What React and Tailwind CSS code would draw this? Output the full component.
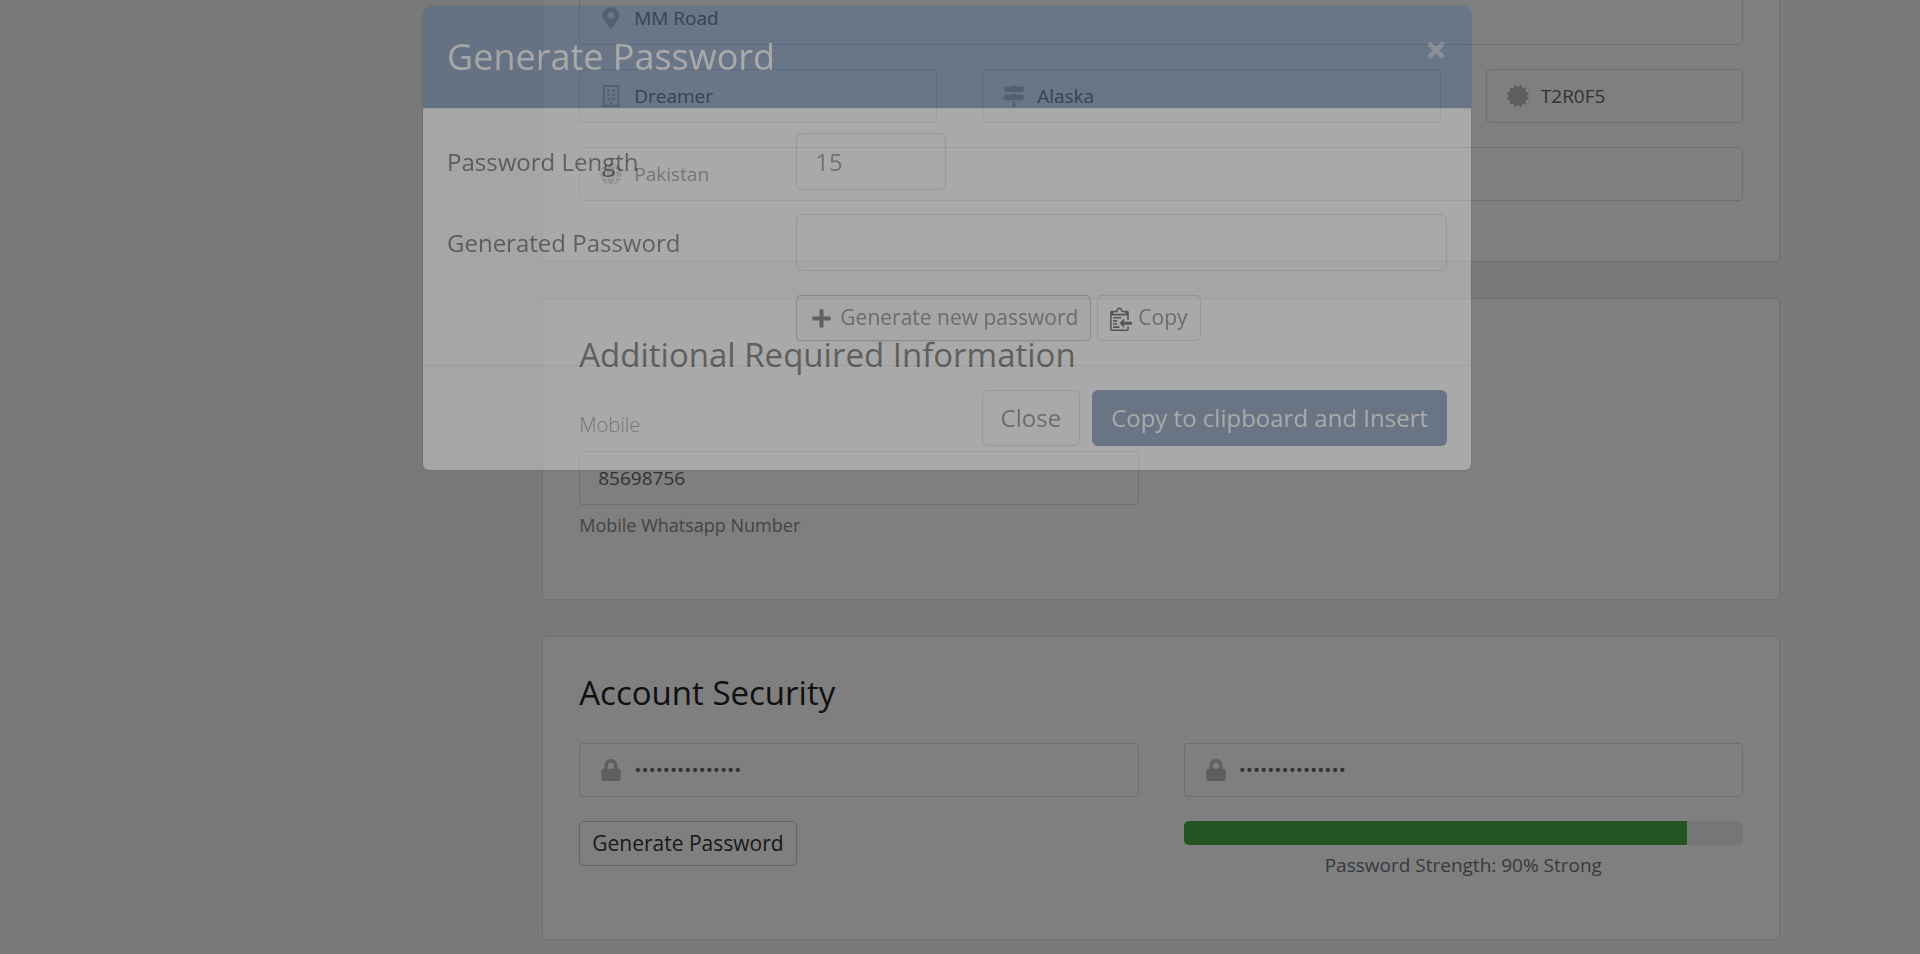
import { FaMapMarkerAlt, FaRegBuilding, FaMapSigns, FaCertificate, FaGlobe, FaLock, FaPlus } from "react-icons/fa";

const INPUT = "min-w-0 flex-1 appearance-none self-stretch bg-transparent pr-4 text-[19px] text-[#666] outline-none";

function Card({ children }) {
  return (
    <section className="rounded-[5px] border border-black/12 bg-white p-9">{children}</section>
  );
}

function Field({ id, label, icon: Icon, className = "", children }) {
  return (
    <div className={`flex h-[54px] items-center rounded-[4px] border border-[#dcdcdc] bg-white ${className}`}>
      <label htmlFor={id} className="flex w-[54px] justify-center pl-2 text-[#bcbcbc]">
        <Icon className="size-[22px]" aria-hidden="true" />
        <span className="sr-only">{label}</span>
      </label>
      {children}
    </div>
  );
}

function ClippyIcon() {
  return (
    <svg viewBox="0 0 14 16" className="h-[25px] w-[22px] fill-black" aria-hidden="true">
      <path
        fillRule="evenodd"
        d="M2 13h4v1H2v-1zm5-6H2v1h5V7zm2 3V8l-3 3 3 3v-2h5v-2H9zM4.5 9H2v1h2.5V9zM2 12h2.5v-1H2v1zm9 1h1v2c-.02.28-.11.52-.3.7-.19.18-.42.28-.7.3H1c-.55 0-1-.45-1-1V4c0-.55.45-1 1-1h3c0-1.11.89-2 2-2 1.11 0 2 .89 2 2h3c.55 0 1 .45 1 1v5h-1V6H1v9h10v-2zM2 5h8c0-.55-.45-1-1-1H8c-.55 0-1-.45-1-1s-.45-1-1-1-1 .45-1 1-.45 1-1 1H3c-.55 0-1 .45-1 1z"
      />
    </svg>
  );
}

function PasswordDialog() {
  return (
    <div className="fixed inset-0 flex items-start justify-center overflow-hidden pt-[5px] pr-[26px]">
      <div
        role="dialog"
        aria-labelledby="dialog-title"
        className="w-full max-w-[1050px] rounded-[7px] border border-black/20 bg-white bg-clip-padding opacity-33"
      >
        <div className="flex h-[103px] items-start justify-between rounded-t-[6px] border-b border-black/12 bg-[#3d6498] bg-clip-padding px-6 pt-6">
          <h2 id="dialog-title" className="text-[36px] leading-[54px] font-medium text-white">
            Generate Password
          </h2>
          <button type="button" aria-label="Close dialog" className="text-[38px] leading-[36px] font-bold text-white opacity-50 text-shadow-[0_1px_0_#fff]">
            ×
          </button>
        </div>
        <div className="flex flex-col gap-6 p-6">
          <div className="grid grid-cols-12 items-center gap-x-12">
            <label htmlFor="length" className="col-span-4 text-[24px] whitespace-nowrap text-[#222]">
              Password Length
            </label>
            <div className="col-span-8">
              <input id="length" type="text" defaultValue="15" className="h-[57px] w-[150px] rounded-[6px] border border-black/20 bg-white px-[18px] text-[24px] text-[#555]" />
            </div>
          </div>
          <div className="grid grid-cols-12 items-center gap-x-12">
            <label htmlFor="generated" className="col-span-4 text-[24px] whitespace-nowrap text-[#222]">
              Generated Password
            </label>
            <input id="generated" type="text" className="col-span-8 h-[57px] rounded-[6px] border border-black/20 bg-white px-[18px] text-[24px] text-[#555]" />
          </div>
          <div className="grid grid-cols-12 gap-x-12">
            <div className="col-span-8 col-start-5 flex gap-1.5">
              <button type="button" className="flex h-[46px] items-center gap-1.5 rounded-[5px] border border-black/30 bg-[#f5f5f5] px-3 text-[21px] text-[#444] shadow-sm">
                <FaPlus className="w-[25px] text-[#222]" aria-hidden="true" />
                Generate new password
              </button>
              <button type="button" className="flex h-[46px] items-center gap-1.5 rounded-[5px] border border-black/20 px-3 text-[21px] text-[#444]">
                <ClippyIcon />
                Copy
              </button>
            </div>
          </div>
        </div>
        <div className="flex justify-end gap-3 border-t border-black/12 p-6">
          <button type="button" className="h-14 rounded-[6px] border border-black/20 px-[18px] text-[24px] text-[#444]">
            Close
          </button>
          <button type="button" className="h-14 rounded-[6px] bg-[#3d6390] px-[19px] text-[24px] font-medium text-white">
            Copy to clipboard and Insert
          </button>
        </div>
      </div>
    </div>
  );
}

export default function App() {
  return (
    <div className="relative font-['Open_Sans','Noto_Sans',sans-serif]">
      <main className="flex h-screen flex-col justify-end overflow-hidden bg-[#f2f2f2] pr-[25px] pb-3.5">
        <div className="mx-auto flex w-full max-w-[1709px]">
          <div className="w-1/4" />
          <form className="flex w-3/4 flex-col gap-9 px-[22px]">
            <Card>
              <div className="grid grid-cols-12 gap-x-[45px] gap-y-6 pb-6">
                <Field id="street" label="Street Address" icon={FaMapMarkerAlt} className="col-span-12">
                  <input id="street" defaultValue="MM Road" className={INPUT} />
                </Field>
                <Field id="city" label="City" icon={FaRegBuilding} className="col-span-4">
                  <input id="city" defaultValue="Dreamer" className={INPUT} />
                </Field>
                <Field id="state" label="State" icon={FaMapSigns} className="col-span-5">
                  <input id="state" defaultValue="Alaska" className={INPUT} />
                </Field>
                <Field id="postcode" label="Postcode" icon={FaCertificate} className="col-span-3">
                  <input id="postcode" defaultValue="T2R0F5" className={INPUT} />
                </Field>
                <Field id="country" label="Country" icon={FaGlobe} className="col-span-12">
                  <select id="country" className={INPUT}>
                    <option>Pakistan</option>
                  </select>
                </Field>
              </div>
            </Card>

            <Card>
              <h3 className="text-[33px] leading-10 text-[#222]">Additional Required Information</h3>
              <div className="grid grid-cols-2 gap-x-[45px] pb-6">
                <div className="flex flex-col pt-9">
                  <label htmlFor="mobile" className="mb-3 text-[20px] leading-7 font-light text-[#666]">
                    Mobile
                  </label>
                  <input id="mobile" defaultValue="85698756" className="h-[54px] rounded-[4px] border border-[#dcdcdc] bg-white px-[18px] text-[19px] text-[#666]" />
                  <p className="mt-1.5 text-[18px] leading-7 text-[#888]">Mobile Whatsapp Number</p>
                </div>
              </div>
            </Card>

            <Card>
              <h3 className="text-[33px] leading-10 text-[#222]">Account Security</h3>
              <div className="grid grid-cols-2 gap-x-[45px] gap-y-6 pt-[30px] pb-6">
                <Field id="password" label="Password" icon={FaLock}>
                  <input id="password" type="password" defaultValue="abcdefghijklmno" className={INPUT} />
                </Field>
                <Field id="confirm" label="Confirm Password" icon={FaLock}>
                  <input id="confirm" type="password" defaultValue="abcdefghijklmno" className={INPUT} />
                </Field>
                <div>
                  <button type="button" className="h-[45px] rounded-[4px] border border-[#ccc] bg-white px-3 text-[21px] text-[#333]">
                    Generate Password
                  </button>
                </div>
                <div>
                  <div role="progressbar" aria-valuenow={90} aria-valuemin={0} aria-valuemax={100} className="h-6 overflow-hidden rounded-[5px] bg-[#e9ecef]">
                    <div className="h-full w-9/10 bg-[#46a843]" />
                  </div>
                  <p className="mt-1.5 text-center text-[19px] leading-7 text-[#6c757d]">Password Strength: 90% Strong</p>
                </div>
              </div>
            </Card>
          </form>
        </div>
      </main>
      <div className="fixed inset-0 bg-black/50" />
      <PasswordDialog />
    </div>
  );
}
